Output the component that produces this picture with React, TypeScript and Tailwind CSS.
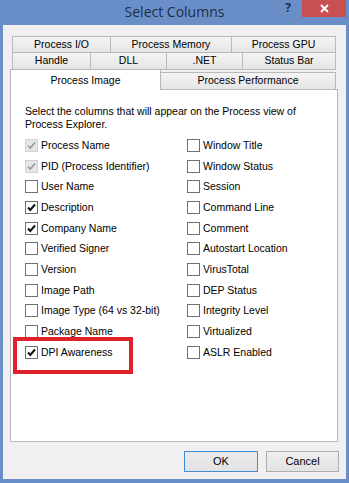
import React from "react";

type Item = { label: string; state: "disabled" | "checked" | "unchecked" };

const left: Item[] = [
  { label: "Process Name", state: "disabled" },
  { label: "PID (Process Identifier)", state: "disabled" },
  { label: "User Name", state: "unchecked" },
  { label: "Description", state: "checked" },
  { label: "Company Name", state: "checked" },
  { label: "Verified Signer", state: "unchecked" },
  { label: "Version", state: "unchecked" },
  { label: "Image Path", state: "unchecked" },
  { label: "Image Type (64 vs 32-bit)", state: "unchecked" },
  { label: "Package Name", state: "unchecked" },
  { label: "DPI Awareness", state: "checked" },
];

const right: Item[] = [
  "Window Title",
  "Window Status",
  "Session",
  "Command Line",
  "Comment",
  "Autostart Location",
  "VirusTotal",
  "DEP Status",
  "Integrity Level",
  "Virtualized",
  "ASLR Enabled",
].map((l) => ({ label: l, state: "unchecked" as const }));

function Box({ state }: { state: Item["state"] }) {
  if (state === "disabled") {
    return (
      <div className="w-[13px] h-[13px] shrink-0 border border-[#d2d2d2] bg-[#e6e6e6] flex items-center justify-center">
        <svg width="11" height="11" viewBox="0 0 11 11">
          <path d="M2 5.5 L4.3 8 L9 2.5" fill="none" stroke="#9a9a9a" strokeWidth="1.8" />
        </svg>
      </div>
    );
  }
  return (
    <div className="w-[13px] h-[13px] shrink-0 border border-[#6f6f6f] bg-white flex items-center justify-center">
      {state === "checked" && (
        <svg width="11" height="11" viewBox="0 0 11 11">
          <path d="M2 5.5 L4.3 8 L9 2.5" fill="none" stroke="#111" strokeWidth="2" />
        </svg>
      )}
    </div>
  );
}

function Row({ item }: { item: Item }) {
  return (
    <div className="h-[20.7px] flex items-center gap-[3px]">
      <Box state={item.state} />
      <span className="text-[10.5px] leading-[13px] text-black whitespace-nowrap">{item.label}</span>
    </div>
  );
}

const tabBase =
  "flex items-center justify-center text-[10.5px] text-black border-[#b9b9b9] bg-gradient-to-b from-[#f4f4f4] to-[#e5e5e5]";

export default function App() {
  return (
    <div
      className="w-[349px] h-[483px] bg-[#6a8fc8] flex flex-col relative overflow-hidden"
      style={{ fontFamily: '"Liberation Sans", Arial, sans-serif' }}
    >
      {/* Title bar */}
      <div className="h-[25px] flex items-start relative">
        <div
          className="absolute left-0 right-0 top-0 h-[23px] flex items-center justify-center text-[14px] text-[#1c2e4a]"
          style={{ fontFamily: '"Open Sans", sans-serif' }}
        >
          Select Columns
        </div>
        <div className="ml-auto flex items-start relative">
          <div
            className="w-[16px] h-[16px] mr-[6px] flex items-center justify-center text-[12px] leading-none font-bold text-[#1c2e4a]"
            style={{ fontFamily: '"Open Sans", sans-serif' }}
          >
            ?
          </div>
          <div className="w-[44px] h-[17px] mr-[3px] bg-[#c75050] flex items-center justify-center">
            <svg width="9" height="9" viewBox="0 0 9 9">
              <path d="M1 1 L8 8 M8 1 L1 8" stroke="#fff" strokeWidth="1.8" />
            </svg>
          </div>
        </div>
      </div>

      {/* Client */}
      <div className="flex-1 mx-[3px] mb-[4px] bg-[#f0f0f0] flex flex-col pt-[11px] pl-[7px] pr-[8px]">
        {/* Tabs */}
        <div className="flex flex-col">
          <div className="flex mx-[2px] h-[17px]">
            <div className={`${tabBase} w-[99px] border`}>Process I/O</div>
            <div className={`${tabBase} w-[121px] border border-l-0`}>Process Memory</div>
            <div className={`${tabBase} flex-1 border border-l-0`}>Process GPU</div>
          </div>
          <div className="flex mx-[2px] h-[17px]">
            <div className={`${tabBase} w-[79px] border border-t-0`}>Handle</div>
            <div className={`${tabBase} w-[76px] border border-t-0 border-l-0`}>DLL</div>
            <div className={`${tabBase} w-[76px] border border-t-0 border-l-0`}>.NET</div>
            <div className={`${tabBase} flex-1 border border-t-0 border-l-0`}>Status Bar</div>
          </div>
          <div className="flex items-end h-[19px]">
            <div className="w-[151px] h-[21px] -mb-px relative z-10 bg-white border border-b-0 border-[#b9b9b9] flex items-start justify-center pt-[3px] text-[10.5px] text-black">
              Process Image
            </div>
            <div className={`${tabBase} flex-1 mr-[2px] h-[17px] border border-l-0 border-b-0`}>
              Process Performance
            </div>
          </div>
        </div>

        {/* Panel */}
        <div className="h-[353px] bg-white border border-[#b9b9b9] px-[13px] pt-[15px]">
          <p className="ml-px text-[10.5px] leading-[13px] text-black">
            Select the columns that will appear on the Process view of
            <br />
            Process Explorer.
          </p>
          <div className="mt-[4px] grid grid-cols-[163px_1fr]">
            <div className="flex flex-col pl-px">
              {left.map((it) => (
                <Row key={it.label} item={it} />
              ))}
            </div>
            <div className="flex flex-col">
              {right.map((it) => (
                <Row key={it.label} item={it} />
              ))}
            </div>
          </div>
        </div>

        {/* Buttons */}
        <div className="flex justify-end gap-[8px] mt-[9px] mr-[-1px]">
          <button className="w-[74px] h-[21px] border border-[#3c8ed6] bg-gradient-to-b from-[#ececec] to-[#e2e2e2] text-[11px] text-black">
            OK
          </button>
          <button className="w-[73px] h-[21px] border border-[#adadad] bg-gradient-to-b from-[#efefef] to-[#e3e3e3] text-[11px] text-black">
            Cancel
          </button>
        </div>
      </div>

      {/* Annotation highlight */}
      <div className="absolute left-[13px] top-[337px] w-[120px] h-[37px] border-[4.5px] border-[#e0202a] pointer-events-none" />
    </div>
  );
}
